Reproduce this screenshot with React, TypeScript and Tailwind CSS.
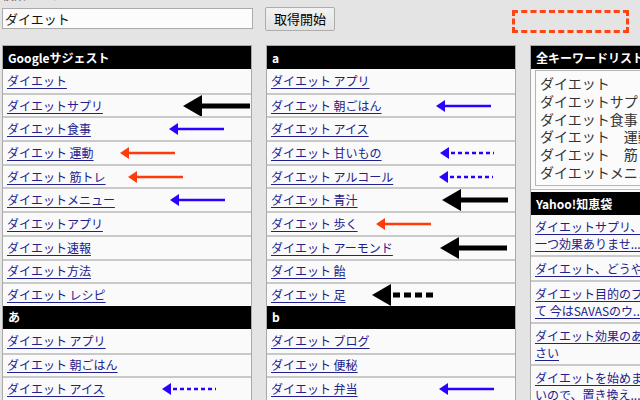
import React from "react";

type ArrowKind = "black" | "blue" | "red" | "blueDash" | "blackDash";

type Row = { text: string; arrow?: { from: number; to: number; kind: ArrowKind } };
type Section = { title: string; rows: Row[] };

const Arrow = ({ from, to, kind }: { from: number; to: number; kind: ArrowKind }) => {
	const w = to - from;
	const big = kind === "black" || kind === "blackDash";
	const h = big ? 22 : 12;
	const head = big ? 19 : 9;
	const stroke = big ? 5 : 2.5;
	const cy = h / 2;
	const color = big ? "#000000" : kind === "red" ? "#ff3b0c" : "#2c00ff";
	const dash =
		kind === "blueDash" ? "4 3" : kind === "blackDash" ? "7 4" : undefined;
	return (
		<svg
			width={w}
			height={h}
			className="absolute top-1/2 -translate-y-1/2 pointer-events-none"
			style={{ left: from }}
		>
			<line
				x1={dash ? head + 2 : head - 1}
				y1={cy}
				x2={w}
				y2={cy}
				stroke={color}
				strokeWidth={stroke}
				strokeDasharray={dash}
			/>
			<polygon points={`0,${cy} ${head},0 ${head},${h}`} fill={color} />
		</svg>
	);
};

const Panel = ({ sections, offset }: { sections: Section[]; offset: number }) => (
	<div className="w-[250px] shrink-0 border border-[#a9a9a9] bg-[#fafafa]">
		{sections.map((section) => (
			<div key={section.title}>
				<div className="h-[23px] bg-black px-[5px] flex items-center text-white font-bold text-[12px]">
					{section.title}
				</div>
				{section.rows.map((row, i) => (
					<div
						key={row.text + i}
						className={`relative h-[23.7px] px-[4px] flex items-center ${
							i > 0 ? "border-t-2 border-[#c9c9c9]" : ""
						}`}
					>
						<a className="text-[12px] leading-[16px] text-[#20208f] underline underline-offset-2 whitespace-nowrap">
							{row.text}
						</a>
						{row.arrow && (
							<Arrow
								from={row.arrow.from - offset}
								to={row.arrow.to - offset}
								kind={row.arrow.kind}
							/>
						)}
					</div>
				))}
			</div>
		))}
	</div>
);

const leftSections: Section[] = [
	{
		title: "Googleサジェスト",
		rows: [
			{ text: "ダイエット" },
			{ text: "ダイエットサプリ", arrow: { from: 183, to: 250, kind: "black" } },
			{ text: "ダイエット食事", arrow: { from: 169, to: 224, kind: "blue" } },
			{ text: "ダイエット 運動", arrow: { from: 120, to: 175, kind: "red" } },
			{ text: "ダイエット 筋トレ", arrow: { from: 128, to: 183, kind: "red" } },
			{ text: "ダイエットメニュー", arrow: { from: 170, to: 225, kind: "blue" } },
			{ text: "ダイエットアプリ" },
			{ text: "ダイエット速報" },
			{ text: "ダイエット方法" },
			{ text: "ダイエット レシピ" },
		],
	},
	{
		title: "あ",
		rows: [
			{ text: "ダイエット アプリ" },
			{ text: "ダイエット 朝ごはん" },
			{ text: "ダイエット アイス", arrow: { from: 162, to: 216, kind: "blueDash" } },
		],
	},
];

const middleSections: Section[] = [
	{
		title: "a",
		rows: [
			{ text: "ダイエット アプリ" },
			{ text: "ダイエット 朝ごはん", arrow: { from: 436, to: 491, kind: "blue" } },
			{ text: "ダイエット アイス" },
			{ text: "ダイエット 甘いもの", arrow: { from: 440, to: 494, kind: "blueDash" } },
			{ text: "ダイエット アルコール", arrow: { from: 439, to: 493, kind: "blueDash" } },
			{ text: "ダイエット 青汁", arrow: { from: 442, to: 508, kind: "black" } },
			{ text: "ダイエット 歩く", arrow: { from: 376, to: 431, kind: "red" } },
			{ text: "ダイエット アーモンド", arrow: { from: 440, to: 507, kind: "black" } },
			{ text: "ダイエット 飴" },
			{ text: "ダイエット 足", arrow: { from: 372, to: 434, kind: "blackDash" } },
		],
	},
	{
		title: "b",
		rows: [
			{ text: "ダイエット ブログ" },
			{ text: "ダイエット 便秘" },
			{ text: "ダイエット 弁当", arrow: { from: 439, to: 494, kind: "blue" } },
		],
	},
];

const allKeywords = [
	"ダイエット",
	"ダイエットサプリ",
	"ダイエット食事",
	"ダイエット　運動",
	"ダイエット　筋トレ",
	"ダイエットメニュー",
];

const chiebukuro = [
	["ダイエットサプリ、たくさん試しましたが何", "一つ効果ありませ..."],
	["ダイエット、どうやったら痩せられますか？"],
	["ダイエット目的のプロテインを飲んでい", "て 今はSAVASのウ..."],
	["ダイエット効果のある飲み物を教えてくだ", "さい"],
	["ダイエットを始めましたがお腹が空いて辛", "いので、置き換え..."],
];

const App = () => {
	return (
		<div className="w-[640px] h-[400px] overflow-hidden bg-[#e4e4e4] font-['Noto_Sans_CJK_JP',sans-serif]">
			<div className="-mt-[12px] pl-[2px]">
				<div className="h-[14px] text-[12px] leading-[14px] text-[#555]">
					検索キーワード
				</div>
				<div className="mt-[6px] flex items-start">
					<input
						readOnly
						value="ダイエット"
						className="w-[251px] h-[21px] border border-[#ababab] bg-[#fcfcfc] px-[2px] text-[13px] text-[#111] outline-none"
					/>
					<button className="ml-[12px] -mt-[1px] w-[70px] h-[24px] border border-[#adadad] rounded-[2px] bg-gradient-to-b from-[#f2f2f2] to-[#e2e2e2] text-[13px] text-black">
						取得開始
					</button>
					<div className="ml-[177px] mt-[2px] w-[117px] h-[23px] border-[3px] border-dashed border-[#ff4312]" />
				</div>
				<div className="mt-[12px] flex items-start">
					<Panel sections={leftSections} offset={3} />
					<div className="ml-[14px]">
						<Panel sections={middleSections} offset={267} />
					</div>
					<div className="ml-[14px] w-[260px] shrink-0 border border-[#a9a9a9] bg-[#fafafa]">
						<div className="h-[23px] bg-black px-[5px] flex items-center text-white font-bold text-[12px]">
							全キーワードリスト
						</div>
						<div className="px-[4px] pt-[1px] pb-[3px] border-b border-[#bdbdbd]">
							<div className="h-[116px] border border-[#b5b5b5] bg-[#fbfbfb] pl-[4px] pt-[4px] overflow-hidden">
								{allKeywords.map((k) => (
									<div
										key={k}
										className="text-[14px] leading-[17.8px] text-[#333] whitespace-nowrap"
									>
										{k}
									</div>
								))}
							</div>
						</div>
						<div className="mt-[2px] h-[23px] bg-black px-[5px] flex items-center text-white font-bold text-[12px]">
							Yahoo!知恵袋
						</div>
						{chiebukuro.map((lines, i) => (
							<div
								key={i}
								className={`px-[4px] py-[3px] ${i > 0 ? "border-t-2 border-[#c9c9c9]" : ""}`}
							>
								<a className="block text-[12px] leading-[17px] text-[#20208f] underline underline-offset-2 whitespace-nowrap">
									{lines.map((line, j) => (
										<span key={j} className="block">
											{line}
										</span>
									))}
								</a>
							</div>
						))}
					</div>
				</div>
			</div>
		</div>
	);
};

export default App;
